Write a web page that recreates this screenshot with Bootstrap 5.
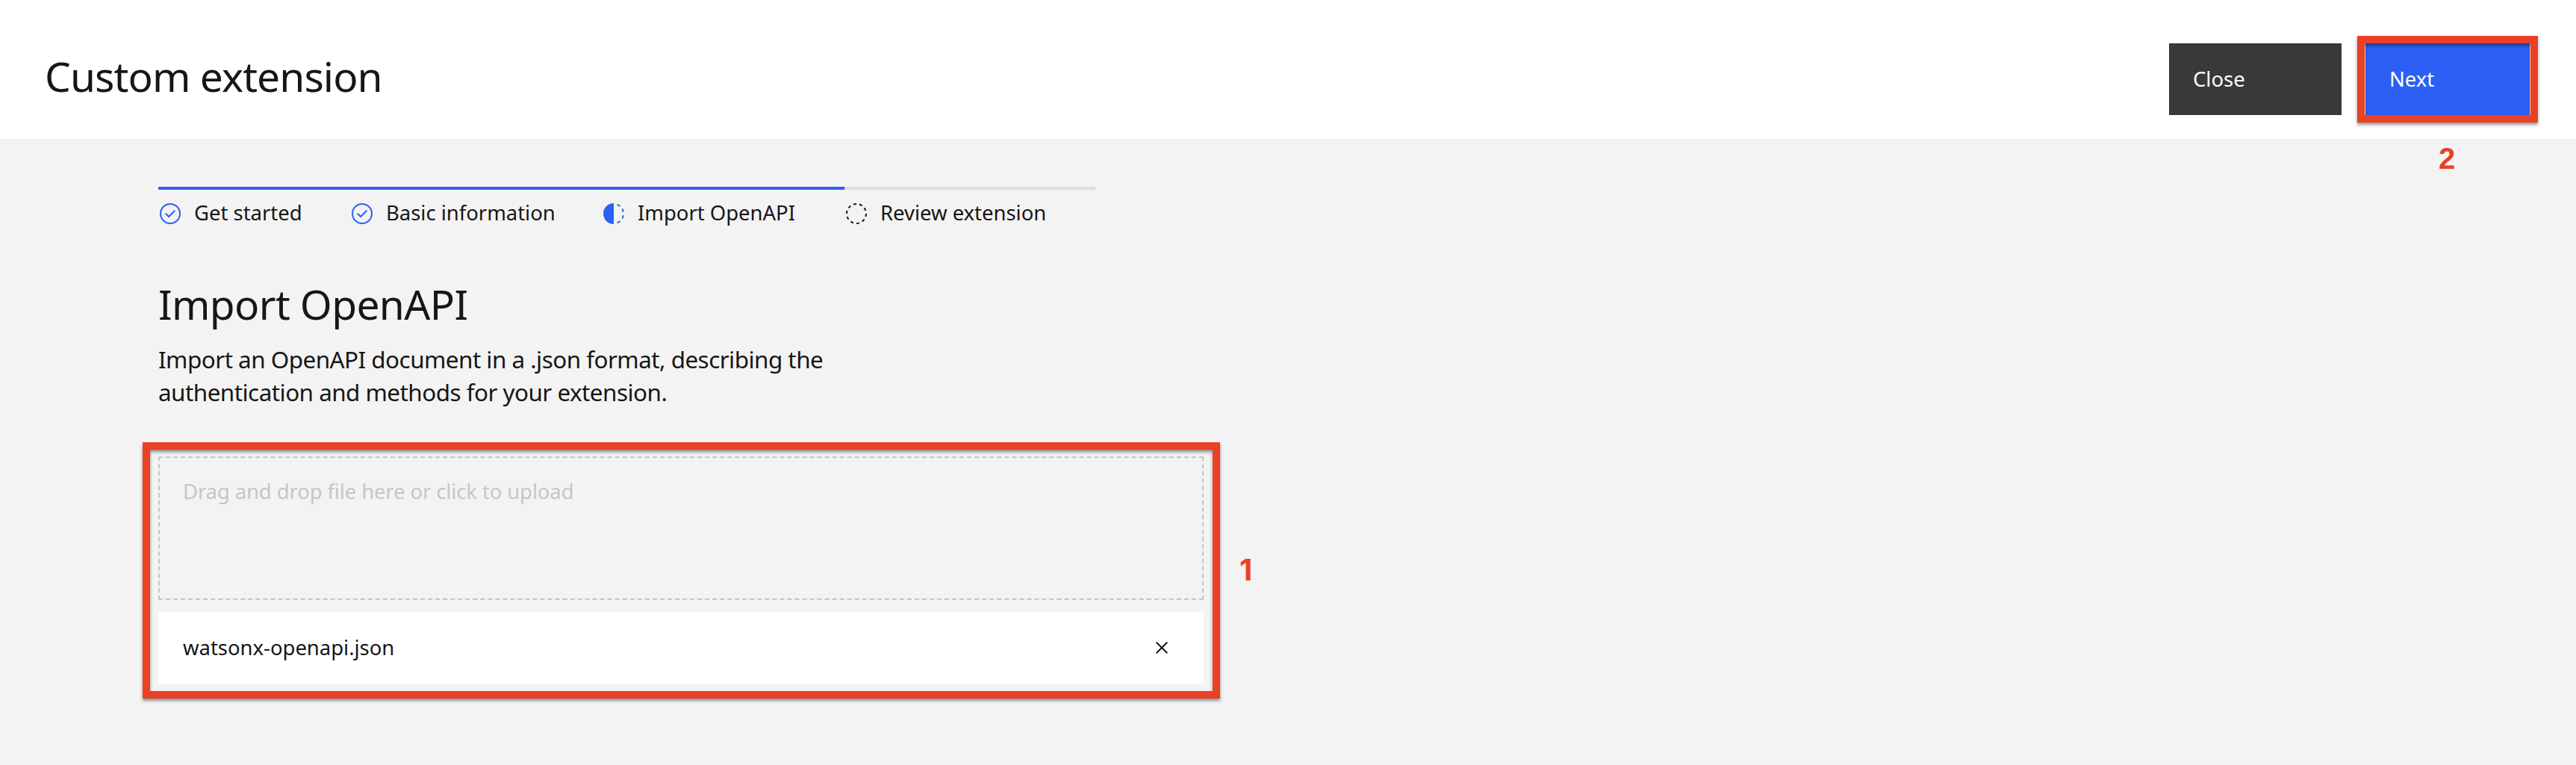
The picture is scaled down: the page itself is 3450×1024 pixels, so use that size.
<!DOCTYPE html>
<html lang="en">
<head>
<meta charset="utf-8">
<meta name="viewport" content="width=device-width, initial-scale=1">
<title>Custom extension</title>
<link href="https://cdn.jsdelivr.net/npm/bootstrap@5.3.0/dist/css/bootstrap.min.css" rel="stylesheet">
<style>
  body { background: #f3f3f3; color: #161616; font-family: "Noto Sans", sans-serif; font-size: 27.44px; line-height: 40px; min-height: 1024px; overflow: hidden; }
  .page-head { height: 186px; padding: 58px 62px 0 60px; background: #fff; }
  .title-lg { font-size: 55px; line-height: 72px; font-weight: 400; margin: 0; }
  .page-head .title-lg { margin-top: 8px; letter-spacing: -.87px; }
  .page-head .btn { --bs-btn-border-radius: 0; --bs-btn-border-width: 0; --bs-btn-font-size: 27.44px; --bs-btn-line-height: 40px; --bs-btn-padding-x: 32px; --bs-btn-padding-y: 27px; height: 96px; text-align: left; }
  .btn-close-flow { --bs-btn-bg: #393939; --bs-btn-color: #fff; width: 231px; }
  .btn-next { --bs-btn-bg: #2c60f5; --bs-btn-color: #fff; width: 220px; }
  .actions { gap: 32px; }
  .callout { position: absolute; border: 10px solid #ea4025; box-shadow: 0 3px 4px rgba(0,0,0,.42), inset 0 3px 4px rgba(0,0,0,.42); pointer-events: none; }
  .callout-next { inset: -10px -11px; }
  .callout-upload { inset: -19px -22px -20px -21px; }
  .callout-no { position: absolute; color: #ea4025; font: 700 40px/40px "Liberation Sans", Arial, sans-serif; }
  .no-two { left: 98px; top: 134px; }
  .no-one { left: 1448px; top: 132px; font-family: Inter, sans-serif; }
  .content { width: 1400px; margin-left: 212px; padding-top: 64px; }
  .step { border-top: 4px solid #2c60f5; padding-top: 11px; gap: 16px; }
  .step svg { margin-top: 2px; color: #2c60f5; }
  .step.todo { border-color: #dedede; }
  .step.todo svg { color: #161616; }
  .step:nth-child(1) { width: 257px; }
  .step:nth-child(2) { width: 337px; }
  .step:nth-child(3) { width: 325px; }
  .step:nth-child(4) { width: 336px; }
  .section-title { margin-top: 66px; letter-spacing: -.6px; }
  .intro { margin: 16px 0 64px; font-size: 31.4px; line-height: 44px; letter-spacing: -.52px; }
  .drop-area { height: 192px; border: 2px dashed #c6c6c6; padding: 25px 31px; color: #c6c6c6; letter-spacing: -.1px; }
  .file-row { height: 96px; padding: 0 40px 0 33px; }
</style>
</head>
<body>
<header class="page-head d-flex justify-content-between align-items-start">
  <h1 class="title-lg">Custom extension</h1>
  <div class="actions d-flex">
    <button type="button" class="btn btn-close-flow">Close</button>
    <div class="position-relative">
      <button type="button" class="btn btn-next d-block">Next</button>
      <span class="callout callout-next"></span>
      <span class="callout-no no-two">2</span>
    </div>
  </div>
</header>
<main class="content">
  <ol class="list-unstyled d-flex m-0">
    <li class="step d-flex align-items-center">
      <svg width="32" height="32" viewBox="0 0 32 32" fill="currentColor"><circle cx="16" cy="16" r="13" fill="none" stroke="currentColor" stroke-width="2"/><path d="M14 21.414 9 16.413 10.413 15 14 18.586 21.585 11 23 12.415z"/></svg>
      <span>Get started</span>
    </li>
    <li class="step d-flex align-items-center">
      <svg width="32" height="32" viewBox="0 0 32 32" fill="currentColor"><circle cx="16" cy="16" r="13" fill="none" stroke="currentColor" stroke-width="2"/><path d="M14 21.414 9 16.413 10.413 15 14 18.586 21.585 11 23 12.415z"/></svg>
      <span>Basic information</span>
    </li>
    <li class="step d-flex align-items-center">
      <svg width="32" height="32" viewBox="0 0 32 32" fill="currentColor"><path d="M23.764 6.859l1.285-1.531A13.976 13.976 0 0 0 20.867 2.887l-.683 1.878A11.973 11.973 0 0 1 23.764 6.859zM27.81 14l1.968-.413A13.889 13.889 0 0 0 28.14 9.046L26.409 10A12.52 12.52 0 0 1 27.81 14zM20.184 27.235l.683 1.878a13.976 13.976 0 0 0 4.182-2.441l-1.285-1.531A11.973 11.973 0 0 1 20.184 27.235zM26.409 22L28.14 23a14.14 14.14 0 0 0 1.638-4.587L27.81 18.066A12.152 12.152 0 0 1 26.409 22zM16 30V2a14 14 0 0 0 0 28z"/></svg>
      <span>Import OpenAPI</span>
    </li>
    <li class="step todo d-flex align-items-center">
      <svg width="32" height="32" viewBox="0 0 32 32" fill="currentColor"><path d="M7.7 4.7a14.7 14.7 0 0 0-3 3.1L6.3 9A13.26 13.26 0 0 1 8.9 6.3zM4.6 12.3l-1.9-.6A12.51 12.51 0 0 0 2 16H4A11.48 11.48 0 0 1 4.6 12.3zM2.7 20.4a14.4 14.4 0 0 0 2 3.9l1.6-1.2a12.89 12.89 0 0 1-1.7-3.3zM7.8 27.3a14.4 14.4 0 0 0 3.9 2l.6-1.9A12.89 12.89 0 0 1 9 25.7zM11.7 2.7l.6 1.9A11.48 11.48 0 0 1 16 4V2A12.51 12.51 0 0 0 11.7 2.7zM24.2 27.3a15.18 15.18 0 0 0 3.1-3.1L25.7 23A11.53 11.53 0 0 1 23 25.7zM27.4 19.7l1.9.6A15.47 15.47 0 0 0 30 16H28A11.48 11.48 0 0 1 27.4 19.7zM29.2 11.6a14.4 14.4 0 0 0-2-3.9L25.6 8.9a12.89 12.89 0 0 1 1.7 3.3zM24.1 4.6a14.4 14.4 0 0 0-3.9-2l-.6 1.9a12.89 12.89 0 0 1 3.3 1.7zM20.3 29.3l-.6-1.9A11.48 11.48 0 0 1 16 28v2A21.42 21.42 0 0 0 20.3 29.3z"/></svg>
      <span>Review extension</span>
    </li>
  </ol>
  <h2 class="title-lg section-title">Import OpenAPI</h2>
  <p class="intro">Import an OpenAPI document in a .json format, describing the<br>authentication and methods for your extension.</p>
  <div class="position-relative">
    <div class="drop-area">Drag and drop file here or click to upload</div>
    <div class="file-row d-flex align-items-center justify-content-between bg-white mt-3">
      <span>watsonx-openapi.json</span>
      <svg width="32" height="32" viewBox="0 0 32 32" fill="none" stroke="#161616" stroke-width="2"><path d="M8.7 8.7 23.3 23.3M23.3 8.7 8.7 23.3"/></svg>
    </div>
    <span class="callout callout-upload"></span>
    <span class="callout-no no-one">1</span>
  </div>
</main>
<script src="https://cdn.jsdelivr.net/npm/bootstrap@5.3.0/dist/js/bootstrap.bundle.min.js"></script>
</body>
</html>
